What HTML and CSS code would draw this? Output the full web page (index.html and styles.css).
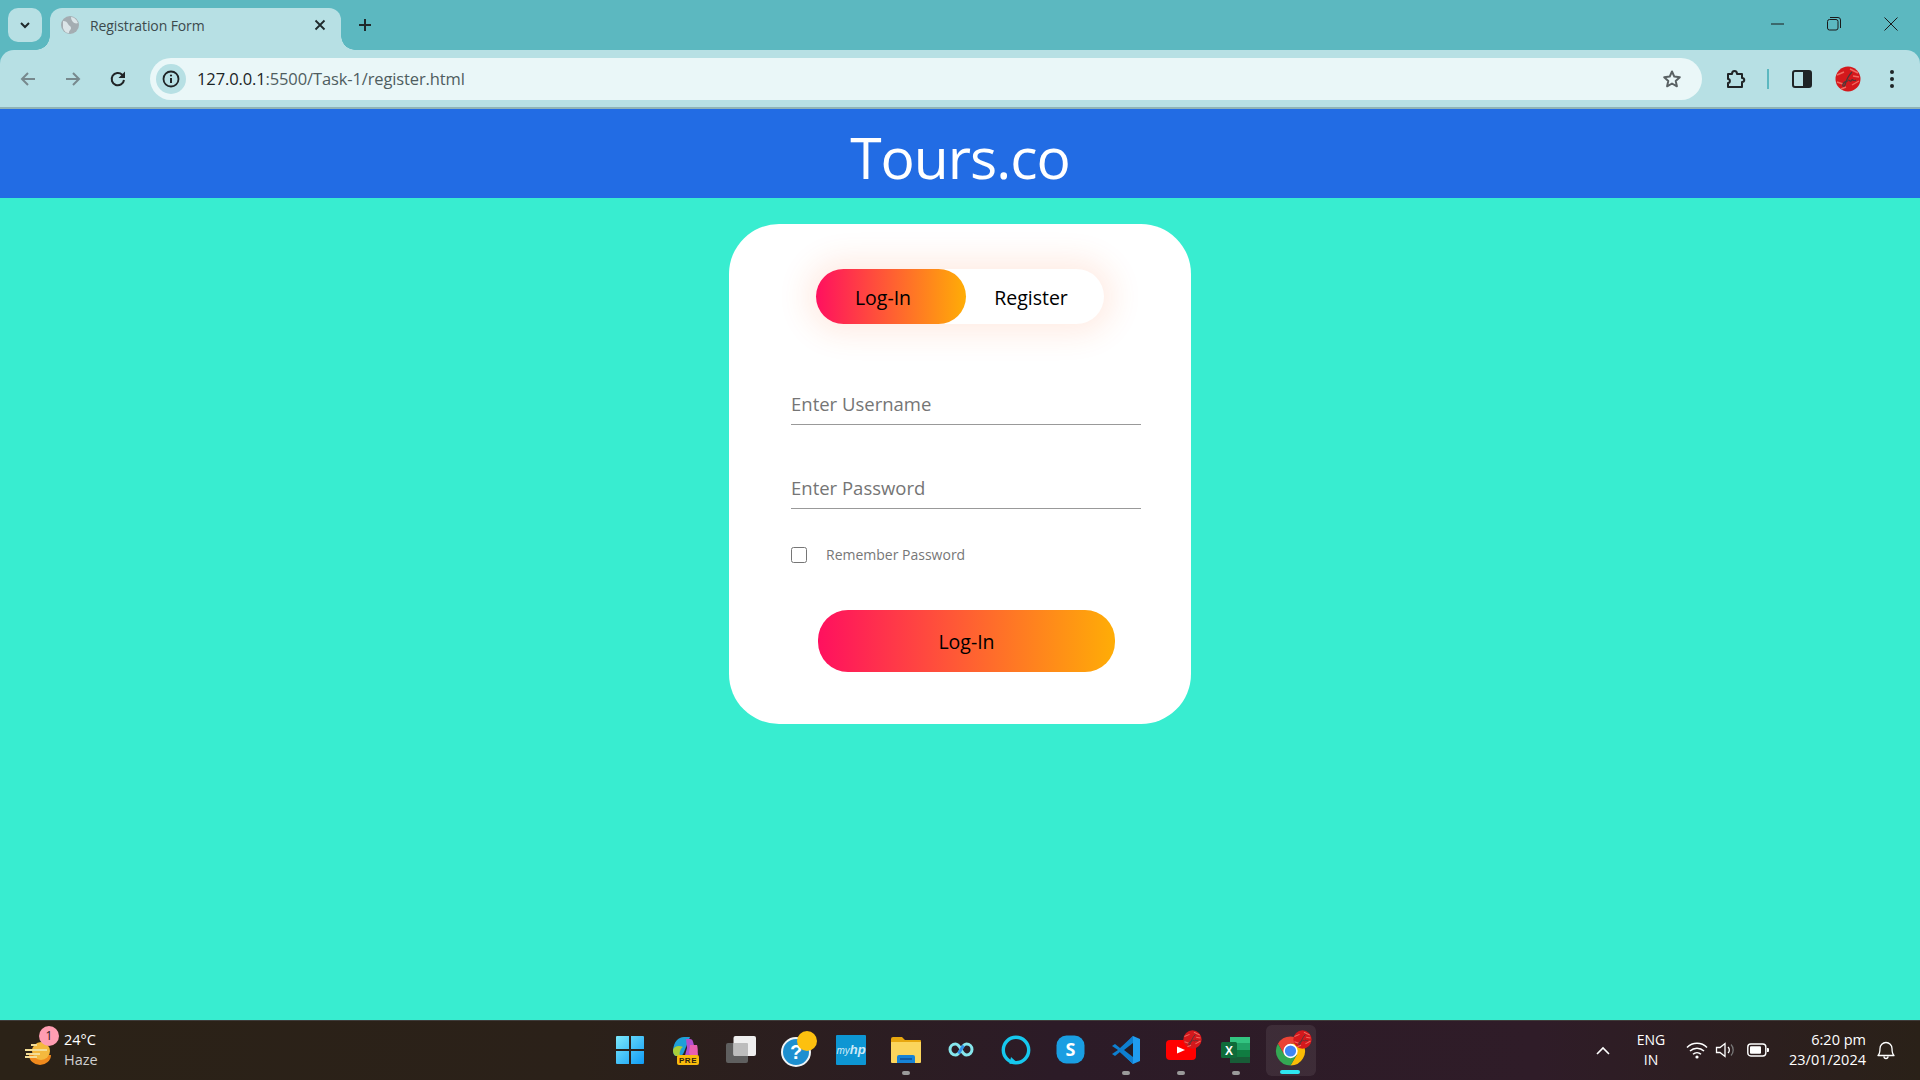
FILE: index.html
```html
<!DOCTYPE html>
<html lang="en">
<head>
<meta charset="utf-8">
<title>Registration Form</title>
<link rel="stylesheet" href="styles.css">
</head>
<body>
<svg class="defs" width="0" height="0" aria-hidden="true">
  <defs>
    <symbol id="avatar" viewBox="0 0 26 26">
      <circle cx="13" cy="13" r="12.5" fill="#d4181c"/>
      <path d="M2 9 9 6M15 3l8 4M2 16l6 2M17 19l7-4M18 10l6 1M6 23l5-2" stroke="#f06a60" stroke-width="1.4" fill="none"/>
      <path d="M17 6c-3 3-6 9-7 13-.6 2-3 1.500-2-1 1-2 3-3 5-3M13 14c2 0 2 2 3 1s1-2 2-1 1 1 3 0" stroke="#4a3a3a" stroke-width="1.2" fill="none"/>
    </symbol>
  </defs>
</svg>

<header class="chrome">
  <div class="tabstrip">
    <button class="tab-search"><svg width="14" height="14" viewBox="0 0 14 14"><path d="M3 5l4 4 4-4" fill="none" stroke="#1f2a2c" stroke-width="2"/></svg></button>
    <div class="tab">
      <svg class="favicon" width="18" height="18" viewBox="0 0 18 18"><circle cx="9" cy="9" r="9" fill="#a4adb2"/><path d="M2 5c3 0 4 1 5 3s3 2 3 4-2 2-2 5c-3 0-5-2-6-5zM10 1c3 0 6 3 7 6-2 1-4 0-5-1S10 3 10 1z" fill="#dbe5e8"/></svg>
      <span class="tab-title">Registration Form</span>
      <svg class="tab-close" width="12" height="12" viewBox="0 0 12 12"><path d="M1.500 1.500l9 9M10.500 1.500l-9 9" stroke="#1f2a2c" stroke-width="1.800"/></svg>
    </div>
    <svg class="new-tab" width="14" height="14" viewBox="0 0 14 14"><path d="M7 1v12M1 7h12" stroke="#1f2a2c" stroke-width="2"/></svg>
    <div class="win-controls">
      <span class="win-btn"><svg width="14" height="14" viewBox="0 0 14 14"><path d="M0 7h13" stroke="#1a1a1a" stroke-width="1"/></svg></span>
      <span class="win-btn"><svg width="14" height="14" viewBox="0 0 14 14"><rect x=".5" y="2.500" width="10.500" height="10.500" rx="2" fill="none" stroke="#1a1a1a"/><path d="M3 .5h8a2.500 2.500 0 0 1 2.500 2.500v8" fill="none" stroke="#1a1a1a"/></svg></span>
      <span class="win-btn win-close"><svg width="14" height="14" viewBox="0 0 14 14"><path d="M.5.5l13 13M13.500.5l-13 13" stroke="#1a1a1a" stroke-width="1"/></svg></span>
    </div>
  </div>
  <div class="toolbar">
    <span class="tool"><svg width="18" height="18" viewBox="0 0 18 18"><path d="M16 9H3M9 3 3 9l6 6" fill="none" stroke="#77898d" stroke-width="2"/></svg></span>
    <span class="tool"><svg width="18" height="18" viewBox="0 0 18 18"><path d="M2 9h13M9 3l6 6-6 6" fill="none" stroke="#77898d" stroke-width="2"/></svg></span>
    <span class="tool"><svg width="18" height="18" viewBox="0 0 18 18"><path d="M15 10a6.200 6.200 0 1 1-1.800-5.300L15 6.500" fill="none" stroke="#1f2426" stroke-width="2"/><path d="M16 1.500V8H9.500z" fill="#1f2426"/></svg></span>
    <div class="omnibox">
      <span class="site-info"><svg width="18" height="18" viewBox="0 0 18 18"><circle cx="9" cy="9" r="7.500" fill="none" stroke="#1f2426" stroke-width="1.800"/><path d="M9 8v5" stroke="#1f2426" stroke-width="2"/><circle cx="9" cy="5.500" r="1.100" fill="#1f2426"/></svg></span>
      <span class="url"><span class="url-host">127.0.0.1</span>:5500/Task-1/register.html</span>
      <svg class="star" width="20" height="20" viewBox="0 0 20 20"><path d="M10 2.500l2.300 5.100 5.500.6-4.100 3.700 1.200 5.400L10 14.500l-4.900 2.800 1.200-5.400-4.100-3.700 5.500-.6z" fill="none" stroke="#5a6264" stroke-width="2" stroke-linejoin="round"/></svg>
    </div>
    <span class="tool ext"><svg width="20" height="20" viewBox="0 0 20 20"><path d="M2 5h4c0-4 5-4 5 0h5v4c3 0 3 4 0 4v5H2v-4c2.500 0 2.500-4 0-4z" fill="none" stroke="#1f2426" stroke-width="2" stroke-linejoin="round"/></svg></span>
    <span class="divider"></span>
    <span class="tool side"><svg width="20" height="20" viewBox="0 0 20 20"><rect x="1" y="2" width="18" height="16" rx="2" fill="none" stroke="#1f2426" stroke-width="2"/><path d="M11 2h6a2 2 0 0 1 2 2v12a2 2 0 0 1-2 2h-6z" fill="#1f2426"/></svg></span>
    <span class="tool avatar"><svg width="26" height="26"><use href="#avatar"/></svg></span>
    <span class="tool menu"><svg width="6" height="18" viewBox="0 0 6 18"><circle cx="3" cy="2" r="2" fill="#1f2426"/><circle cx="3" cy="9" r="2" fill="#1f2426"/><circle cx="3" cy="16" r="2" fill="#1f2426"/></svg></span>
  </div>
  <div class="toolbar-line"></div>
</header>

<div class="site-header"><h1 class="brand">Tours.co</h1></div>

<main class="page">
  <section class="card">
    <div class="toggle">
      <button class="toggle-btn toggle-login">Log-In</button>
      <button class="toggle-btn toggle-register">Register</button>
    </div>
    <form class="form">
      <input class="field" type="text" placeholder="Enter Username">
      <input class="field field-second" type="password" placeholder="Enter Password">
      <label class="remember"><input class="check" type="checkbox"><span>Remember Password</span></label>
      <button class="submit" type="button">Log-In</button>
    </form>
  </section>
</main>

<footer class="taskbar">
  <div class="weather">
    <span class="weather-icon">
      <svg width="30" height="30" viewBox="0 0 30 30"><path d="M6 19h22a11 10 0 0 1-22 0z" fill="#f08a1d"/><circle cx="18" cy="15" r="9" fill="#f4b93e"/><path d="M8 9h6M2 14h18M3 18h14M2 21h12M19 14h5" stroke="#f3dd96" stroke-width="2"/></svg>
      <span class="weather-badge">1</span>
    </span>
    <span class="weather-text"><span class="temp">24°C</span><span class="cond">Haze</span></span>
  </div>

  <div class="apps">
    <span class="app app-start"><svg width="30" height="30" viewBox="0 0 30 30"><defs><linearGradient id="win" x1="0" y1="0" x2="1" y2="1"><stop offset="0" stop-color="#7ce8fb"/><stop offset="1" stop-color="#0f9bf5"/></linearGradient></defs><path d="M1 2a1 1 0 0 1 1-1h12v13H1zM16 1h12a1 1 0 0 1 1 1v12H16zM1 16h13v13H2a1 1 0 0 1-1-1zM16 16h13v12a1 1 0 0 1-1 1H16z" fill="url(#win)"/></svg></span>
    <span class="app"><svg width="32" height="32" viewBox="0 0 32 32"><path d="M3 16C4 8 8 3 14 3h6l-6 15c-1 3-3 4-5 4H6c-2 0-3-3-3-6z" fill="#1f9fd8"/><path d="M3 16c0 4 2 6 4 6h3c-1-3 0-7 3-9-4-2-9-1-10 3z" fill="#a9cf3a"/><path d="M16 5h4c3 0 3 3 4 6l4 9c0 3-3 5-6 5h-8l3-11z" fill="#b24fd0"/><path d="M20 11h7c1 3 1 9 0 11-3 1-7 0-8-3z" fill="#e85fb0"/><rect x="7" y="21" width="22" height="10" rx="2" fill="#f9bb0c"/><text x="18" y="29" class="pre">PRE</text></svg></span>
    <span class="app"><svg width="32" height="30" viewBox="0 0 32 30"><rect x="1" y="8" width="22" height="20" rx="2" fill="#5f5f5f"/><rect x="8.500" y="1" width="22.500" height="20" rx="2" fill="#efefef"/><rect x="8.500" y="8" width="14.500" height="13" rx="1" fill="#bdbdbd"/></svg></span>
    <span class="app"><svg width="40" height="36" viewBox="0 0 40 36"><circle cx="20" cy="20" r="14" fill="#1d8fd0" stroke="#f0f4f6" stroke-width="2"/><text x="20" y="27" class="qmark">?</text><circle cx="31" cy="9" r="10" fill="#fdc00f"/></svg></span>
    <span class="app"><svg width="30" height="30" viewBox="0 0 30 30"><rect width="30" height="30" rx="1" fill="#0d96d3"/><text x="15" y="19" class="myhp">my<tspan class="myhp-b">hp</tspan></text></svg></span>
    <span class="app has-pill"><svg width="32" height="28" viewBox="0 0 32 28"><path d="M1 3a2 2 0 0 1 2-2h9l3 3h15a1 1 0 0 1 1 1v4H1z" fill="#e8a70f"/><path d="M1 6h30v20a1 1 0 0 1-1 1H2a1 1 0 0 1-1-1z" fill="#fbd55c"/><path d="M7 21a2 2 0 0 1 2-2h14a2 2 0 0 1 2 2v6H7z" fill="#1783d6"/><path d="M10 23h12" stroke="#0c4f96" stroke-width="1.500"/></svg></span>
    <span class="app"><svg width="22" height="15" viewBox="0 0 22 15"><path d="M11 7.500C8.800 3 7 2 5.500 2a5.500 5.500 0 0 0 0 11C7 13 8.800 12 11 7.500c2.200-4.500 4-5.500 5.500-5.500a5.500 5.500 0 0 1 0 11C15 13 13.200 12 11 7.500z" fill="none" stroke="#86e6ec" stroke-width="3"/><path d="M8.500 11.500 11 7.500l2.500-4" fill="none" stroke="#2f8fe8" stroke-width="3"/></svg></span>
    <span class="app"><svg width="30" height="30" viewBox="0 0 30 30"><circle cx="15" cy="15" r="12.700" fill="none" stroke="#16c8ee" stroke-width="3.400"/><path d="M8.500 29 10 22l6 5.500z" fill="#16c8ee"/></svg></span>
    <span class="app"><svg width="29" height="29" viewBox="0 0 29 29"><rect x="0.500" y="0.500" width="28" height="28" rx="10" fill="#1a9ee2"/><text x="14.500" y="21" class="skype">S</text></svg></span>
    <span class="app has-pill"><svg width="30" height="30" viewBox="0 0 30 30"><path d="M22 1 29 4v22l-7 3L8 16z" fill="#1f9cf0"/><path d="M22 1v28L9 17l-5 4-3-2 6-4-6-4 3-2 5 4z" fill="#0e7fd0"/><path d="M22 8v14l-9-7z" fill="#241c26"/></svg></span>
    <span class="app has-pill"><svg width="36" height="36" viewBox="0 0 36 36"><rect x="3" y="8" width="30" height="20" rx="4" fill="#f00"/><path d="M14 14.500 22 18 14 21.500z" fill="#fff"/><use href="#avatar" x="20" y="-2" width="19" height="19"/></svg></span>
    <span class="app has-pill"><svg width="30" height="28" viewBox="0 0 30 28"><path d="M9 1h20v6H9z" fill="#33c481"/><path d="M9 7h20v7H9z" fill="#21a366"/><path d="M9 14h20v7H9z" fill="#107c41"/><path d="M9 21h20v6H9z" fill="#185c37"/><rect y="6" width="16" height="16" rx="1.500" fill="#0f6b3a"/><text x="8" y="19" class="xl">X</text></svg></span>
    <span class="app app-active"><svg width="36" height="36" viewBox="0 0 36 36"><g transform="translate(17.500 19)"><path d="M-12.560-7.250A14.500 14.500 0 0 1 12.560-7.250H0L-6.280 3.630z" fill="#ea4335"/><path d="M12.560-7.250A14.500 14.500 0 0 1 0 14.500L6.280 3.630 0-7.250z" fill="#fbbc05"/><path d="M0 14.500A14.500 14.500 0 0 1-12.560-7.250L-6.280 3.630H6.280z" fill="#34a853"/><circle r="7.200" fill="#fff"/><circle r="5.600" fill="#3f86f4"/></g><use href="#avatar" x="20" y="-2" width="19" height="19"/></svg></span>
  </div>

  <div class="tray">
    <span class="tray-chev"><svg width="14" height="10" viewBox="0 0 14 10"><path d="M1 8l6-6 6 6" fill="none" stroke="#fff" stroke-width="1.600"/></svg></span>
    <span class="lang">ENG<br>IN</span>
    <span class="tray-wifi"><svg width="22" height="18" viewBox="0 0 22 18"><path d="M1 6.500a14 14 0 0 1 20 0M4 10a10 10 0 0 1 14 0M7 13.200a6 6 0 0 1 8 0" fill="none" stroke="#fff" stroke-width="1.500"/><circle cx="11" cy="16" r="1.600" fill="#fff"/></svg></span>
    <span class="tray-vol"><svg width="22" height="18" viewBox="0 0 22 18"><path d="M1.500 6.500h3.500L10 2.500v13l-5-4H1.500z" fill="none" stroke="#fff" stroke-width="1.300"/><path d="M13 6a4 4 0 0 1 0 6" fill="none" stroke="#fff" stroke-width="1.300"/><path d="M16 3.500a8 8 0 0 1 0 11" fill="none" stroke="#777" stroke-width="1.300"/></svg></span>
    <span class="tray-batt"><svg width="22" height="14" viewBox="0 0 22 14"><rect x=".8" y="1" width="18" height="12" rx="3" fill="none" stroke="#fff" stroke-width="1.400"/><rect x="3" y="3.200" width="11" height="7.600" rx="1" fill="#fff"/><path d="M20 5h1a1 1 0 0 1 1 1v2a1 1 0 0 1-1 1h-1z" fill="#fff"/></svg></span>
    <span class="clock">6:20 pm<br>23/01/2024</span>
    <span class="tray-bell"><svg width="18" height="20" viewBox="0 0 18 20"><path d="M1 15.500c2-2 2-4 2-7a6 6 0 0 1 12 0c0 3 0 5 2 7zM7 16.500a2 2 0 0 0 4 0" fill="none" stroke="#fff" stroke-width="1.300" stroke-linejoin="round"/></svg></span>
  </div>
</footer>
</body>
</html>
```

FILE: styles.css
```css
* { box-sizing: border-box; }
html, body { margin: 0; padding: 0; }
body {
  width: 1920px;
  height: 1080px;
  overflow: hidden;
  display: flex;
  flex-direction: column;
  font-family: "Open Sans", "Noto Sans", sans-serif;
  background: #38edd0;
}
.defs { position: absolute; }

/* browser chrome */
.chrome { flex: none; background: #5cb8c0; }
.tabstrip { height: 50px; display: flex; align-items: flex-start; padding-left: 8px; }
.tab-search {
  width: 34px; height: 34px; margin-top: 8px; padding: 0; border: 0;
  border-radius: 10px; background: #b7e0e4;
  display: flex; align-items: center; justify-content: center;
}
.tab {
  position: relative;
  width: 291px; height: 42px; margin: 8px 0 0 8px; padding: 0 14px 8px 11px;
  display: flex; align-items: center;
  background: #b7e0e4; border-radius: 12px 12px 0 0;
}
.tab::before, .tab::after {
  content: ""; position: absolute; bottom: 0; width: 14px; height: 14px;
}
.tab::before { left: -14px; background: radial-gradient(circle at 0 0, transparent 13.500px, #b7e0e4 14px); }
.tab::after { right: -14px; background: radial-gradient(circle at 100% 0, transparent 13.500px, #b7e0e4 14px); }
.favicon { flex: none; }
.tab-title { margin-left: 11px; font-size: 14px; color: #3c4a4d; letter-spacing: -.1px; }
.tab-close { margin-left: auto; margin-right: 1px; }
.new-tab { margin: 18px 0 0 17px; }
.win-controls { margin-left: auto; display: flex; }
.win-btn { width: 56px; height: 48px; display: flex; align-items: center; justify-content: center; }
.win-close { width: 58px; }

.toolbar {
  height: 57px; padding: 0 10px; display: flex; align-items: center;
  background: #b7e0e4; border-radius: 14px 14px 0 0;
}
.tool { flex: none; width: 36px; height: 36px; margin-right: 9px; display: flex; align-items: center; justify-content: center; }
.omnibox {
  flex: 1; height: 42px; margin-left: 5px; padding: 0 20px 0 6px;
  display: flex; align-items: center;
  background: #eaf7f8; border-radius: 21px;
}
.site-info { flex: none; width: 30px; height: 30px; border-radius: 50%; background: #b7e0e4; display: flex; align-items: center; justify-content: center; }
.url { margin-left: 11px; font-size: 16.500px; color: #4f5d60; letter-spacing: -.12px; }
.url-host { color: #1b2426; }
.star { margin-left: auto; }
.tool.ext { margin: 0 0 0 16px; }
.divider { flex: none; width: 2px; height: 20px; margin: 0 0 0 13px; background: #5cb8c0; }
.tool.side { margin: 0 0 0 15px; }
.tool.avatar { margin: 0 0 0 10px; }
.tool.menu { margin: 0 0 0 8px; }
.toolbar-line { height: 2px; background: #8fb3b6; }

/* site */
.site-header { flex: none; height: 89px; background: #226ce4; display: flex; justify-content: center; }
.brand { margin: 3px 0 0; font-size: 57px; line-height: 90px; font-weight: 380; color: #fff; letter-spacing: -1px; }

.page { flex: 1; display: flex; justify-content: center; align-items: flex-start; padding-top: 26px; }
.card {
  width: 462px; height: 500px; padding-top: 45px;
  background: #fff; border-radius: 50px;
}
.toggle {
  width: 288px; height: 55px; margin: 0 auto; display: flex;
  border-radius: 30px; box-shadow: 0 0 30px 10px #ff61241f;
}
.toggle-btn {
  height: 55px; border: 0; background: none; padding: 2px 0 0; font: inherit; font-size: 19.500px; font-weight: 380; color: #000;
}
.toggle-login {
  width: 150px; padding-right: 16px; border-radius: 30px;
  background: linear-gradient(to right, #ff105f, #ffad06);
}
.toggle-register { width: 138px; padding-right: 8px; }

.form { margin-top: 61px; padding-left: 62px; display: flex; flex-direction: column; align-items: flex-start; }
.field {
  width: 350px; height: 40px; padding: 0 0 3px 0;
  border: 0; border-bottom: 1px solid #999; outline: 0;
  font: inherit; font-size: 18.500px; background: transparent;
}
.field::placeholder { color: #757575; }
.field-second { margin-top: 44px; }
.remember { margin-top: 36px; display: flex; align-items: center; font-size: 14px; color: #777; }
.check { width: 16px; height: 16px; margin: 0 19px 0 0; }
.submit {
  width: 297px; height: 62px; margin: 46px 0 0 27px; border: 0; border-radius: 30px; padding: 0;
  background: linear-gradient(to right, #ff105f, #ffad06);
  font: inherit; font-size: 19.500px; font-weight: 380; color: #000;
}

/* taskbar */
.taskbar {
  flex: none; height: 60px; display: grid; grid-template-columns: 603px 715px 1fr;
  background: linear-gradient(to right, #2b2217 0, #2b2119 30%, #2c1b27 55%, #2f1c28 80%, #2a2118 100%);
  border-top: 1px solid #3f3c3a;
}
.weather { display: flex; align-items: center; padding: 0 0 2px 23px; }
.weather-icon { position: relative; width: 30px; height: 30px; margin-top: 3px; }
.weather-badge {
  position: absolute; left: 16px; top: -10px; width: 20px; height: 20px; border-radius: 50%;
  background: #ff9db2; color: #2a1a1a; font-size: 12px; line-height: 20px; text-align: center;
}
.weather-text { margin-left: 11px; display: flex; flex-direction: column; font-size: 14.500px; line-height: 20px; }
.temp { color: #fff; }
.cond { color: #cfcfcf; }

.apps { display: flex; }
.app { position: relative; width: 55px; height: 59px; padding-bottom: 2px; display: flex; align-items: center; justify-content: center; }
.app-start { padding-right: 2px; }
.has-pill::after {
  content: ""; position: absolute; left: 24px; bottom: 5px; width: 8px; height: 4px; border-radius: 2px; background: #9a9a9a;
}
.app-active::before {
  content: ""; position: absolute; left: 3px; right: 2px; top: 4px; bottom: 4px;
  background: rgba(255,255,255,.08); border-radius: 6px;
}
.app-active::after {
  content: ""; position: absolute; left: 17px; bottom: 6px; width: 20px; height: 4px; border-radius: 2px; background: #2ee6f0;
}
.app svg { position: relative; overflow: visible; }
.pre { font: 800 8px "Liberation Sans", sans-serif; text-anchor: middle; fill: #2a2010; letter-spacing: .5px; }
.qmark { font: 700 20px "Liberation Sans", sans-serif; text-anchor: middle; fill: #fff; }
.myhp { font: italic 400 10px "Liberation Sans", sans-serif; text-anchor: middle; fill: #cfeaf7; }
.myhp-b { font-weight: 700; font-size: 13px; }
.skype { font: 700 18px "Open Sans", sans-serif; text-anchor: middle; fill: #fff; }
.xl { font: 700 12px "Liberation Sans", sans-serif; text-anchor: middle; fill: #fff; }

.tray { display: flex; align-items: center; justify-content: flex-end; padding: 0 22px 2px 0; color: #fff; font-size: 14px; }
.tray span { flex: none; display: flex; align-items: center; justify-content: center; }
.tray-chev { width: 24px; margin-top: 2px; }
.tray .lang { display: block; width: 40px; margin-left: 16px; text-align: center; line-height: 20px; }
.tray-wifi { width: 26px; margin-left: 13px; }
.tray-vol { width: 24px; margin-left: 4px; }
.tray-batt { width: 28px; margin-left: 6px; }
.tray .clock { display: block; width: 94px; text-align: right; line-height: 20px; font-size: 14.500px; }
.tray-bell { width: 24px; margin-left: 8px; }
```
